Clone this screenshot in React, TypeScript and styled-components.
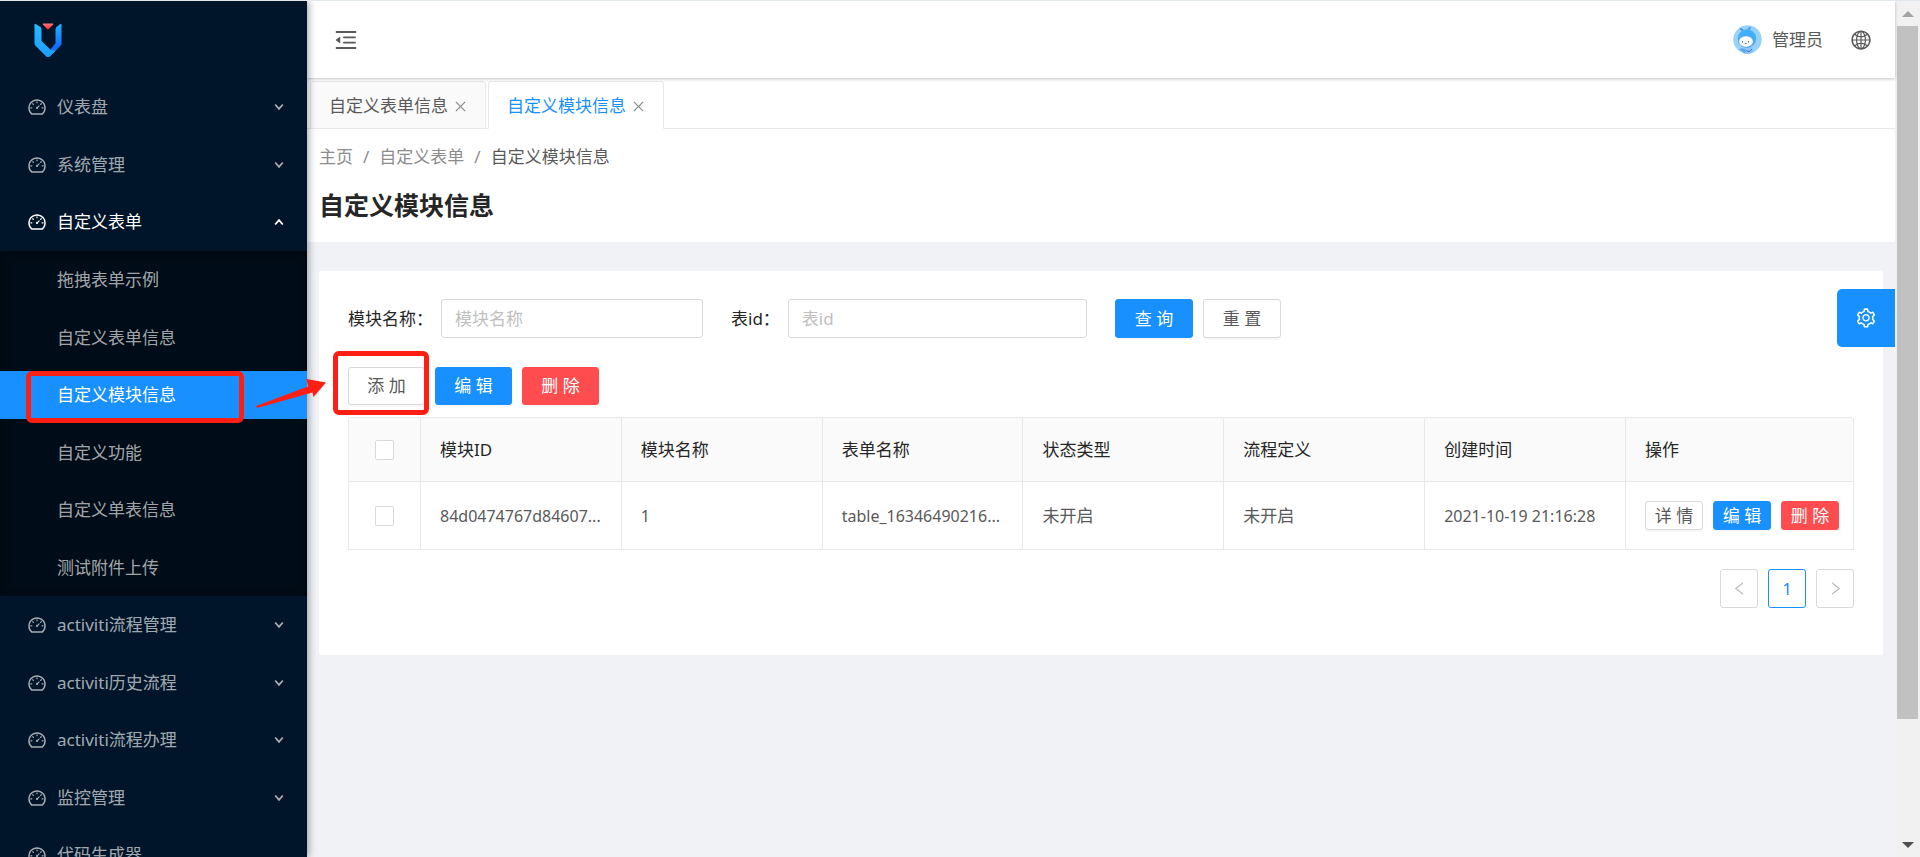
import React from 'react';
import styled, { createGlobalStyle, css } from 'styled-components';
import {
  AiOutlineClose,
  AiOutlineDashboard,
  AiOutlineGlobal,
  AiOutlineLeft,
  AiOutlineMenuFold,
  AiOutlineRight,
  AiOutlineSetting,
} from 'react-icons/ai';

const GlobalStyle = createGlobalStyle`
  *, *::before, *::after { box-sizing: border-box; }
  body {
    margin: 0;
    overflow: hidden;
    color: #595959;
    font-family: 'Noto Sans', 'Noto Sans CJK SC', sans-serif;
    font-size: 17px;
    line-height: 24px;
  }
  ul, ol { margin: 0; padding: 0; list-style: none; }
  a { color: inherit; text-decoration: none; }
  button, input { font: inherit; color: inherit; }
  svg { display: block; flex: none; }
`;

const Page = styled.div`
  display: flex;
  height: 100vh;
  overflow: hidden;
  background: #f0f2f5;
  border-top: 1px solid #e3e8ee;
`;

/* ---------- sidebar ---------- */

const Sidebar = styled.aside`
  position: relative;
  z-index: 1;
  flex: none;
  width: 307px;
  background: #001529;
  box-shadow: 2px 0 7px rgba(0, 21, 41, 0.35);
`;

const Brand = styled.a`
  display: flex;
  align-items: center;
  height: 77px;
  padding-left: 28px;
`;

const Menu = styled.ul`
  height: calc(100vh - 78px);
  overflow: hidden;
`;

const SubMenu = styled.ul`
  background: #000c17;
  box-shadow: inset 0 2px 8px rgba(0, 0, 0, 0.45);
`;

const MenuRow = styled.li`
  padding: 5px 0 4px;
  &:nth-child(odd) { padding-bottom: 5px; }
`;

const MenuLink = styled.a<{ $tone?: 'open' | 'selected'; $nested?: boolean }>`
  position: relative;
  display: flex;
  align-items: center;
  gap: 10px;
  height: 48px;
  padding: 0 22px 0 ${(p) => (p.$nested ? 57 : 27)}px;
  color: ${(p) => (p.$tone ? '#fff' : 'rgba(255, 255, 255, 0.65)')};
  background: ${(p) => (p.$tone === 'selected' ? '#1890ff' : 'transparent')};
`;

const MenuText = styled.span`
  flex: 1;
  white-space: nowrap;
`;

const markStyle = css`
  position: absolute;
  border: 5px solid #ff1e14;
  border-radius: 6px;
  pointer-events: none;
`;

const MenuMark = styled.span`
  ${markStyle}
  left: 26px;
  right: 63px;
  top: 0;
  bottom: -4px;
`;

/* ---------- top bar and tabs ---------- */

const Main = styled.div`
  flex: 1;
  min-width: 0;
`;

const TopBar = styled.header`
  position: relative;
  display: flex;
  align-items: center;
  justify-content: space-between;
  height: 77px;
  padding: 0 23px 0 26px;
  background: #fff;
  box-shadow: 0 1px 3px rgba(0, 21, 41, 0.25);
`;

const IconButton = styled.button`
  display: flex;
  padding: 0;
  border: 0;
  background: none;
`;

const UserArea = styled.div`
  display: flex;
  align-items: center;
  gap: 27px;
`;

const User = styled.a`
  display: flex;
  align-items: center;
  gap: 10px;
`;

const TabBar = styled.nav`
  display: flex;
  gap: 2px;
  height: 51px;
  padding: 3px 0 0 3px;
  background: #fff;
  border-bottom: 1px solid #e8e8e8;
`;

const Tab = styled.div<{ $active?: boolean }>`
  display: flex;
  align-items: center;
  gap: 5px;
  height: 48px;
  padding: 2px 17px 0 18px;
  border: 1px solid #e8e8e8;
  border-bottom-color: ${(p) => (p.$active ? '#fff' : '#e8e8e8')};
  border-radius: 3px 3px 0 0;
  color: ${(p) => (p.$active ? '#1890ff' : '#595959')};
  background: ${(p) => (p.$active ? '#fff' : '#fafafa')};

  button { color: #8c8c8c; }
`;

const PageHead = styled.div`
  height: 113px;
  padding: 16px 12px 0;
  background: #fff;
`;

const Crumbs = styled.ol`
  display: flex;
  color: #8c8c8c;

  li + li::before {
    content: '/';
    margin: 0 10px;
    color: #8c8c8c;
  }
  li:last-child { color: #595959; }
`;

const Title = styled.h1`
  margin: 18px 0 0;
  font-size: 25px;
  font-weight: 700;
  line-height: 36px;
  color: #262626;
`;

/* ---------- content card ---------- */

const Card = styled.section`
  margin: 29px 12px 0;
  min-height: 384px;
  padding: 28px 29px;
  border-radius: 2px;
  background: #fff;
`;

const SearchForm = styled.form`
  display: flex;
  align-items: center;
  color: #262626;
`;

const Field = styled.div<{ $width: number }>`
  display: flex;
  align-items: center;
  flex: none;
  width: ${(p) => p.$width}px;
  margin-right: 28px;
  gap: 8px;
  white-space: nowrap;
`;

const TextBox = styled.input`
  flex: 1;
  min-width: 0;
  height: 39px;
  padding: 0 13px;
  border: 1px solid #d9d9d9;
  border-radius: 3px;
  outline: none;
  background: #fff;
  &::placeholder { color: #bfbfbf; opacity: 1; }
`;

const ButtonRow = styled.div<{ $top?: number }>`
  display: flex;
  gap: 10px;
  margin-top: ${(p) => p.$top ?? 0}px;
`;

const buttonSizes = {
  large: css`width: 78px; height: 39px;`,
  normal: css`width: 77px; height: 38px;`,
  small: css`width: 58px; height: 29px;`,
};

const Button = styled.button<{ $kind?: 'primary' | 'danger'; $size?: keyof typeof buttonSizes }>`
  flex: none;
  ${(p) => buttonSizes[p.$size ?? 'normal']}
  padding: 0;
  border: 1px solid #d9d9d9;
  border-radius: 3px;
  color: #595959;
  background: #fff;
  line-height: 24px;
  white-space: nowrap;
  box-shadow: 0 2px 0 rgba(0, 0, 0, 0.03);

  ${(p) =>
    p.$kind &&
    css`
      color: #fff;
      border-color: ${p.$kind === 'primary' ? '#1890ff' : '#ff4d4f'};
      background: ${p.$kind === 'primary' ? '#1890ff' : '#ff4d4f'};
    `}
`;

const Marked = styled.div`
  position: relative;
  display: flex;
`;

const ButtonMark = styled.span`
  ${markStyle}
  inset: -16px -4px -10px -15px;
`;

const Arrow = styled.svg`
  position: absolute;
  z-index: 5;
  left: -94px;
  top: 10px;
  pointer-events: none;
`;

const Table = styled.table`
  width: 100%;
  margin-top: 12px;
  table-layout: fixed;
  border-collapse: separate;
  border-spacing: 0;
  border: 1px solid #e8e8e8;
  border-width: 1px 0 0 1px;
  border-radius: 4px 4px 0 0;
`;

const cell = css`
  padding: 0 10px 0 19px;
  border: 1px solid #e8e8e8;
  border-width: 0 1px 1px 0;
  text-align: left;
  font-weight: 400;
  white-space: nowrap;
  overflow: hidden;
`;

const HeadCell = styled.th<{ $width?: string }>`
  ${cell}
  width: ${(p) => p.$width ?? 'auto'};
  height: 64px;
  color: #262626;
  background: #fafafa;
`;

const Cell = styled.td<{ $latin?: boolean }>`
  ${cell}
  height: 68px;
  font-size: ${(p) => (p.$latin ? 16 : 17)}px;
`;

const CheckBox = styled.input`
  display: block;
  appearance: none;
  width: 19px;
  height: 20px;
  margin: 0 7px;
  border: 1px solid #d9d9d9;
  border-radius: 2px;
  background: #fff;
`;

const Pager = styled.nav`
  display: flex;
  justify-content: flex-end;
  gap: 10px;
  margin-top: 19px;
`;

const PageButton = styled.button<{ $current?: boolean }>`
  display: flex;
  align-items: center;
  justify-content: center;
  width: 38px;
  height: 39px;
  padding: 0;
  border: 1px solid ${(p) => (p.$current ? '#1890ff' : '#d9d9d9')};
  border-radius: 3px;
  color: ${(p) => (p.$current ? '#1890ff' : '#bfbfbf')};
  background: #fff;
  line-height: 24px;
`;

const SettingsHandle = styled.button`
  position: absolute;
  top: 289px;
  right: 25px;
  display: flex;
  align-items: center;
  justify-content: center;
  width: 58px;
  height: 58px;
  padding: 0;
  border: 0;
  border-radius: 5px 0 0 5px;
  color: #fff;
  background: #1890ff;
`;

/* ---------- window scroll bar ---------- */

const ScrollBar = styled.div`
  display: flex;
  flex: none;
  flex-direction: column;
  align-items: center;
  width: 25px;
  background: #f1f1f1;
`;

const ScrollArrow = styled.svg`
  margin: 10px 0 9px;
`;

const ScrollThumb = styled.div`
  width: 21px;
  flex: 693;
  background: #c1c1c1;
`;

const ScrollRest = styled.div`
  flex: 113;
`;

/* ---------- drawings ---------- */

const Logo = () => (
  <svg width="40" height="40" viewBox="0 0 40 40" aria-label="logo">
    <defs>
      <linearGradient id="left" x1="0" y1="0" x2="0" y2="1">
        <stop offset="0" stopColor="#24bbff" />
        <stop offset="1" stopColor="#1e9cff" />
      </linearGradient>
      <linearGradient id="right" x1="0" y1="0" x2="0" y2="1">
        <stop offset="0" stopColor="#20b4ff" />
        <stop offset="0.7" stopColor="#0f6cff" />
        <stop offset="1" stopColor="#1890ff" />
      </linearGradient>
      <linearGradient id="gem" x1="0" y1="0" x2="0" y2="1">
        <stop offset="0" stopColor="#fa7a80" />
        <stop offset="1" stopColor="#f5222d" />
      </linearGradient>
    </defs>
    <path d="M33.500 4.400v18.800q0 1.500-1 2.600L22 36.200q-2 1.500-4 0l5.500-8 4-5V9.300q0-1.500 1-2.200l3.800-3q1-.6 1.200.3z" fill="url(#right)" />
    <path d="M6.500 4.400v18.800q0 1.500 1 2.600L18 36.200q2 1.500 4 0l5.500-5.400q-3 .4-5.500-1.500l-2-2-6.500-6.300V9.300q0-1.500-1-2.200l-4.800-3q-1-.6-1.200.3z" fill="url(#left)" />
    <path d="M15.300 3.500h9.400q1.300 0 .5 1L21 9.100q-1 .9-2 0l-4.200-4.600q-.8-1 .5-1z" fill="url(#gem)" />
  </svg>
);

const Avatar = () => (
  <svg width="29" height="29" viewBox="0 0 29 29" aria-hidden="true">
    <defs>
      <clipPath id="disc"><circle cx="14.500" cy="14.500" r="14.200" /></clipPath>
    </defs>
    <g clipPath="url(#disc)">
      <rect width="29" height="29" fill="#98d2fb" />
      <path d="M10.500 6.500Q9.500 4 7 4M15.500 5.500q0-2.500 2-3" stroke="#3b84d8" strokeWidth="1.300" fill="none" />
      <path d="M11 23q5-2 9 0l1 6h-9z" fill="#8cc4f5" />
      <path d="M6 24q4-2 7 1l-1 4z" fill="#5aa5ee" />
      <circle cx="14" cy="13.500" r="9.200" fill="#3fb0fb" />
      <path d="M13.500 25.500 16 27l3-3" stroke="#3f74cf" fill="none" />
      <ellipse cx="13" cy="16.500" rx="7.300" ry="5.700" fill="#fff" stroke="#4c8fd4" strokeWidth=".7" />
      <path d="M9.500 16v1.600M15.500 16v1.600M11.700 18.500h2" stroke="#5a7ea8" strokeWidth="1" fill="none" />
    </g>
  </svg>
);

const Chevron = ({ up }: { up?: boolean }) => (
  <svg width="12" height="10" viewBox="0 0 12 10" fill="none" stroke="currentColor" strokeWidth="1.800" aria-hidden="true">
    <path d={up ? 'M2.200 7.500 6 3.200l3.800 4.300' : 'M2.200 2.500 6 6.800l3.800-4.300'} />
  </svg>
);

/* ---------- data ---------- */

interface Entry {
  label: string;
  children?: string[];
  leaf?: boolean;
}

const selected = '自定义模块信息';

const entries: Entry[] = [
  { label: '仪表盘' },
  { label: '系统管理' },
  {
    label: '自定义表单',
    children: ['拖拽表单示例', '自定义表单信息', '自定义模块信息', '自定义功能', '自定义单表信息', '测试附件上传'],
  },
  { label: 'activiti流程管理' },
  { label: 'activiti历史流程' },
  { label: 'activiti流程办理' },
  { label: '监控管理' },
  { label: '代码生成器', leaf: true },
];

const columns = ['模块ID', '模块名称', '表单名称', '状态类型', '流程定义', '创建时间'];
const record = ['84d0474767d84607...', '1', 'table_16346490216...', '未开启', '未开启', '2021-10-19 21:16:28'];

const SideMenu = () => (
  <Menu>
    {entries.map((entry) => (
      <React.Fragment key={entry.label}>
        <MenuRow>
          <MenuLink href="#" $tone={entry.children ? 'open' : undefined}>
            <AiOutlineDashboard size={20} />
            <MenuText>{entry.label}</MenuText>
            {!entry.leaf && <Chevron up={!!entry.children} />}
          </MenuLink>
        </MenuRow>
        {entry.children && (
          <li>
            <SubMenu>
              {entry.children.map((child) => (
                <MenuRow key={child}>
                  <MenuLink href="#" $nested $tone={child === selected ? 'selected' : undefined}>
                    <MenuText>{child}</MenuText>
                    {child === selected && <MenuMark />}
                  </MenuLink>
                </MenuRow>
              ))}
            </SubMenu>
          </li>
        )}
      </React.Fragment>
    ))}
  </Menu>
);

const App = () => (
  <Page>
    <GlobalStyle />
    <Sidebar>
      <Brand href="#"><Logo /></Brand>
      <SideMenu />
    </Sidebar>

    <Main>
      <TopBar>
        <IconButton aria-label="收起菜单"><AiOutlineMenuFold size={26} /></IconButton>
        <UserArea>
          <User href="#"><Avatar />管理员</User>
          <IconButton aria-label="语言"><AiOutlineGlobal size={22} /></IconButton>
        </UserArea>
      </TopBar>
      <TabBar>
        {['自定义表单信息', '自定义模块信息'].map((name) => (
          <Tab key={name} $active={name === selected}>
            {name}
            <IconButton aria-label="关闭"><AiOutlineClose size={15} /></IconButton>
          </Tab>
        ))}
      </TabBar>
      <PageHead>
        <Crumbs>
          <li><a href="#">主页</a></li>
          <li><a href="#">自定义表单</a></li>
          <li>自定义模块信息</li>
        </Crumbs>
        <Title>自定义模块信息</Title>
      </PageHead>

      <Card>
        <SearchForm>
          <Field $width={355}>
            <label htmlFor="module">模块名称：</label>
            <TextBox id="module" placeholder="模块名称" />
          </Field>
          <Field $width={356}>
            <label htmlFor="table">表id：</label>
            <TextBox id="table" placeholder="表id" />
          </Field>
          <ButtonRow>
            <Button type="button" $size="large" $kind="primary">查 询</Button>
            <Button type="button" $size="large">重 置</Button>
          </ButtonRow>
        </SearchForm>

        <ButtonRow $top={29}>
          <Marked>
            <Button>添 加</Button>
            <ButtonMark />
            <Arrow width="74" height="36" viewBox="0 0 74 36" aria-hidden="true">
              <path d="M2 29 54 9.500 52.500 2 72 5.500 59.500 20l-1-4.500L3 31z" fill="#ff1e14" />
            </Arrow>
          </Marked>
          <Button $kind="primary">编 辑</Button>
          <Button $kind="danger">删 除</Button>
        </ButtonRow>

        <Table>
          <thead>
            <tr>
              <HeadCell $width="72px"><CheckBox type="checkbox" aria-label="全选" /></HeadCell>
              {columns.map((name) => (
                <HeadCell key={name}>{name}</HeadCell>
              ))}
              <HeadCell $width="228px">操作</HeadCell>
            </tr>
          </thead>
          <tbody>
            <tr>
              <Cell><CheckBox type="checkbox" aria-label="选择" /></Cell>
              {record.map((value, i) => (
                <Cell key={columns[i]} $latin={/^[\x20-\x7e]+$/.test(value)}>{value}</Cell>
              ))}
              <Cell>
                <ButtonRow>
                  <Button $size="small">详 情</Button>
                  <Button $size="small" $kind="primary">编 辑</Button>
                  <Button $size="small" $kind="danger">删 除</Button>
                </ButtonRow>
              </Cell>
            </tr>
          </tbody>
        </Table>

        <Pager>
          <PageButton aria-label="上一页"><AiOutlineLeft size={17} /></PageButton>
          <PageButton $current>1</PageButton>
          <PageButton aria-label="下一页"><AiOutlineRight size={17} /></PageButton>
        </Pager>
      </Card>
    </Main>

    <SettingsHandle aria-label="设置"><AiOutlineSetting size={22} /></SettingsHandle>

    <ScrollBar>
      <ScrollArrow width="12" height="6" viewBox="0 0 12 6"><path d="M0 6 6 0l6 6z" fill="#a3a3a3" /></ScrollArrow>
      <ScrollThumb />
      <ScrollRest />
      <ScrollArrow width="12" height="6" viewBox="0 0 12 6"><path d="M0 0l6 6 6-6z" fill="#505050" /></ScrollArrow>
    </ScrollBar>
  </Page>
);

export default App;
